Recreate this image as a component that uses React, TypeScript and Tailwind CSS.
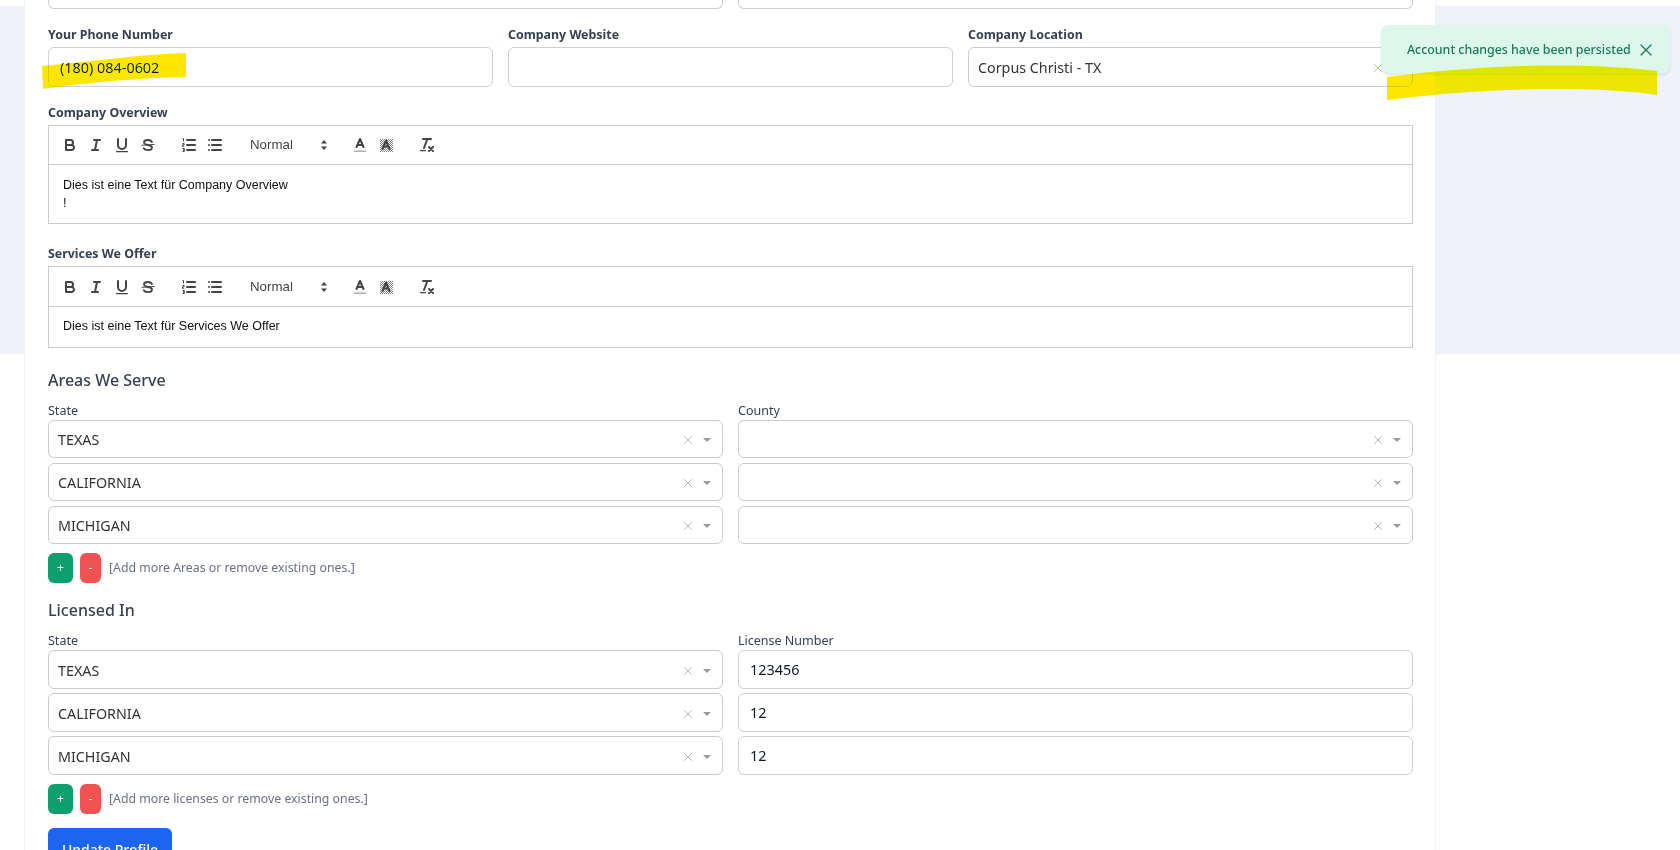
import { X } from "lucide-react";

const ui = "font-['Noto_Sans',sans-serif]";

function Label({ children, className = "" }: { children: string; className?: string }) {
  return <label className={`block pt-[1px] h-5 text-[12.4px] font-bold leading-5 text-[#374151] ${className}`}>{children}</label>;
}

function TextBox({ value = "", className = "h-10" }: { value?: string; className?: string }) {
  return (
    <div className={`flex items-center rounded-md border border-[#cfd0d4] bg-white px-[11px] pt-[1px] text-[14.4px] text-[#111827] ${className}`}>
      {value}
    </div>
  );
}

function Select({ value = "", className = "h-[38px]" }: { value?: string; className?: string }) {
  return (
    <div className={`flex items-center rounded-md border border-[#cccccc] bg-white pl-[9px] pr-[11px] text-[14.3px] text-[#333333] ${className}`}>
      <span className="relative top-[1px] flex-1">{value}</span>
      <X size={14} strokeWidth={1.2} className="relative top-[1px] mr-[8px] text-[#999999]" />
      <svg width="8" height="4" viewBox="0 0 8 4" className="relative top-[1px]">
        <path d="M0 0h8L4 4z" fill="#999999" />
      </svg>
    </div>
  );
}

// quill snow toolbar icons
const stroke = { fill: "none", stroke: "#444", strokeWidth: 2, strokeLinecap: "round" as const, strokeLinejoin: "round" as const };

function Icon({ children }: { children: React.ReactNode }) {
  return (
    <span className="flex h-[24px] w-[26px] items-center justify-center">
      <svg width="18" height="18" viewBox="0 0 18 18">
        {children}
      </svg>
    </span>
  );
}

function Toolbar({ className }: { className: string }) {
  return (
    <div className={`flex items-center border-b border-[#cccccc] pl-[8px] ${className}`}>
      <Icon>
        <path {...stroke} d="M5,4H9.5A2.5,2.5,0,0,1,12,6.5v0A2.5,2.5,0,0,1,9.5,9H5V4Z" />
        <path {...stroke} d="M5,9h5.5A2.5,2.5,0,0,1,13,11.5v0A2.5,2.5,0,0,1,10.5,14H5V9Z" />
      </Icon>
      <Icon>
        <path {...stroke} d="M7 4h6M5 14h6M8 14l2-10" />
      </Icon>
      <Icon>
        <path {...stroke} d="M5,3V9a4,4,0,0,0,4,4h0a4,4,0,0,0,4-4V3" />
        <rect x="3" y="15" width="12" height="1.2" rx=".5" fill="#444" />
      </Icon>
      <Icon>
        <path {...stroke} strokeWidth={1.8} d="M13 6C12.3 4.7 11 4 9 4 6.8 4 5 4.9 5 6.4 5 8 6.8 8.5 9 9c2.4.5 4 1 4 2.6 0 1.5-1.7 2.6-4 2.6-2.2 0-3.7-.7-4.3-2" />
        <line x1="2.5" x2="15.5" y1="9.3" y2="8.5" stroke="#444" strokeWidth="1" />
      </Icon>
      <div className="ml-[15px] flex">
        <Icon>
          <path {...stroke} d="M7 4h8M7 9h8M7 14h8" />
          <path fill="none" stroke="#444" strokeWidth="1" d="M2.5 2.5h1v3M2.5 7.5h1.6v1.4H2.5v1.4h1.8M2.5 12.5h1.8v1.5H3h1.3v1.5H2.5" />
        </Icon>
        <Icon>
          <path {...stroke} d="M6 4h9M6 9h9M6 14h9M3 4h0M3 9h0M3 14h0" />
        </Icon>
      </div>
      <div className="ml-[22px] flex w-[82px] items-center justify-between text-[13.3px] font-medium text-[#444444]">
        <span className="font-['Liberation_Sans',sans-serif]">Normal</span>
        <svg width="8" height="12" viewBox="0 0 8 12" className="mr-[4px]">
          <path d="M4 1l3 3.5H1zM4 11l3-3.5H1z" fill="#444" />
        </svg>
      </div>
      <div className="ml-[15px] flex">
        <Icon>
          <path {...stroke} d="M5.5 11L9 3l3.5 8M6.4 9h5.2" />
          <rect x="3" y="14.5" width="12" height="1.4" fill="#aaaaaa" />
        </Icon>
        <Icon>
          <defs>
            <pattern id="dots" width="2" height="2" patternUnits="userSpaceOnUse">
              <rect width="1" height="1" fill="#8a8a8a" />
              <rect x="1" y="1" width="1" height="1" fill="#8a8a8a" />
            </pattern>
          </defs>
          <rect x="3" y="3" width="13" height="13" fill="url(#dots)" />
          <path {...stroke} d="M5.5 13L9 4.5l3.5 8.5M6.4 10.5h5.2" />
        </Icon>
      </div>
      <div className="ml-[15px] flex">
        <Icon>
          <path {...stroke} d="M5 3h8M6 12L9.35 3M11 11l4 4M15 11l-4 4" />
          <rect x="2" y="14" width="6" height="1.2" rx=".5" fill="#444" />
        </Icon>
      </div>
    </div>
  );
}

function Editor({ lines, bar, body }: { lines: string[]; bar: string; body: string }) {
  return (
    <div className="border border-[#cccccc] bg-white">
      <Toolbar className={bar} />
      <div className={`px-[14px] font-['Liberation_Sans',sans-serif] text-[12.5px] leading-[18px] text-[#111111] ${body}`}>
        {lines.map((l) => (
          <p key={l}>{l}</p>
        ))}
      </div>
    </div>
  );
}

function AddRemove({ hint }: { hint: string }) {
  return (
    <div className="flex h-[30px] items-center">
      <button className="h-[30px] w-[25px] rounded-md bg-[#0e9f6e] text-[12px] text-white">+</button>
      <button className="ml-[7px] h-[30px] w-[21px] rounded-md bg-[#f05252] text-[12px] text-white">-</button>
      <span className="ml-2 text-[12.3px] text-[#6b7280]">{hint}</span>
    </div>
  );
}

export default function App() {
  return (
    <div className={`relative h-[850px] w-[1680px] overflow-hidden bg-white ${ui}`}>
      {/* grey page background behind the card */}
      <div className="absolute left-0 right-0 top-[6px] h-[348px] bg-[#eff3f8]" />

      <div className="relative ml-[24px] h-[900px] w-[1412px] border-x border-[#f0f2f6] bg-white pl-[23px] pr-[22px]">
        <div className="grid grid-cols-2 gap-x-[15px]">
          <div className="h-[9px] rounded-b-md border-x border-b border-[#cfd0d4]" />
          <div className="h-[9px] rounded-b-md border-x border-b border-[#cfd0d4]" />
        </div>

        <div className="mt-[15px] grid grid-cols-3 gap-x-[15px]">
          <div>
            <Label className="mb-[3px]">Your Phone Number</Label>
            <TextBox value="(180) 084-0602" />
          </div>
          <div>
            <Label className="mb-[3px]">Company Website</Label>
            <TextBox />
          </div>
          <div>
            <Label className="mb-[3px]">Company Location</Label>
            <Select value="Corpus Christi - TX" className="h-10" />
          </div>
        </div>

        <Label className="mt-[15px] mb-[3px]">Company Overview</Label>
        <Editor bar="h-[39px]" body="pt-[11px] pb-[11px]" lines={["Dies ist eine Text für Company Overview", "!"]} />

        <Label className="mt-[19px] mb-[3px]">Services We Offer</Label>
        <Editor bar="h-[40px]" body="pt-[10px] pb-[12px]" lines={["Dies ist eine Text für Services We Offer"]} />

        <h3 className="mt-[20px] text-[16px] font-medium leading-6 text-[#374151]">Areas We Serve</h3>
        <div className="mt-[10px] grid grid-cols-2 gap-x-[15px]">
          <div className="flex flex-col gap-[5px]">
            <span className="-mb-[5px] text-[12.5px] leading-[18px] text-[#374151]">State</span>
            <Select value="TEXAS" />
            <Select value="CALIFORNIA" />
            <Select value="MICHIGAN" />
          </div>
          <div className="flex flex-col gap-[5px]">
            <span className="-mb-[5px] text-[12.5px] leading-[18px] text-[#374151]">County</span>
            <Select />
            <Select />
            <Select />
          </div>
        </div>
        <div className="mt-[9px]">
          <AddRemove hint="[Add more Areas or remove existing ones.]" />
        </div>

        <h3 className="mt-[15px] text-[16px] font-medium leading-6 text-[#374151]">Licensed In</h3>
        <div className="mt-[10px] grid grid-cols-2 gap-x-[15px]">
          <div className="flex flex-col gap-[4px]">
            <span className="-mb-[4px] text-[12.5px] leading-[18px] text-[#374151]">State</span>
            <Select value="TEXAS" className="h-[39px]" />
            <Select value="CALIFORNIA" className="h-[39px]" />
            <Select value="MICHIGAN" className="h-[39px]" />
          </div>
          <div className="flex flex-col gap-[4px]">
            <span className="-mb-[4px] text-[12.5px] leading-[18px] text-[#374151]">License Number</span>
            <TextBox value="123456" className="h-[39px]" />
            <TextBox value="12" className="h-[39px]" />
            <TextBox value="12" className="h-[39px]" />
          </div>
        </div>
        <div className="mt-[9px]">
          <AddRemove hint="[Add more licenses or remove existing ones.]" />
        </div>

        <button className="mt-[14px] h-[42px] w-[124px] rounded-md bg-[#1c64f2] text-[14px] font-medium text-white">Update Profile</button>
      </div>

      {/* toast */}
      <div className="absolute left-[1381px] top-[25px] flex h-[49px] w-[289px] items-center rounded-lg bg-[#def7ec] pl-[26px] text-[12.4px] font-medium text-[#1b7a5c] shadow-sm">
        <span className="relative top-[1px]">Account changes have been persisted</span>
        <X size={20} strokeWidth={1.5} className="absolute left-[255px]" />
      </div>

      {/* marker scribbles on top of the screenshot */}
      <svg className="pointer-events-none absolute left-0 top-0 mix-blend-darken" width="1680" height="850">
        <path d="M42 66C90 62 140 54 186 53V77C140 78 90 82 43 89Z" fill="#ffe600" />
        <path d="M1387 77C1480 64 1590 62 1657 71V95C1590 85 1480 88 1387 100Z" fill="#ffe600" />
      </svg>
    </div>
  );
}
